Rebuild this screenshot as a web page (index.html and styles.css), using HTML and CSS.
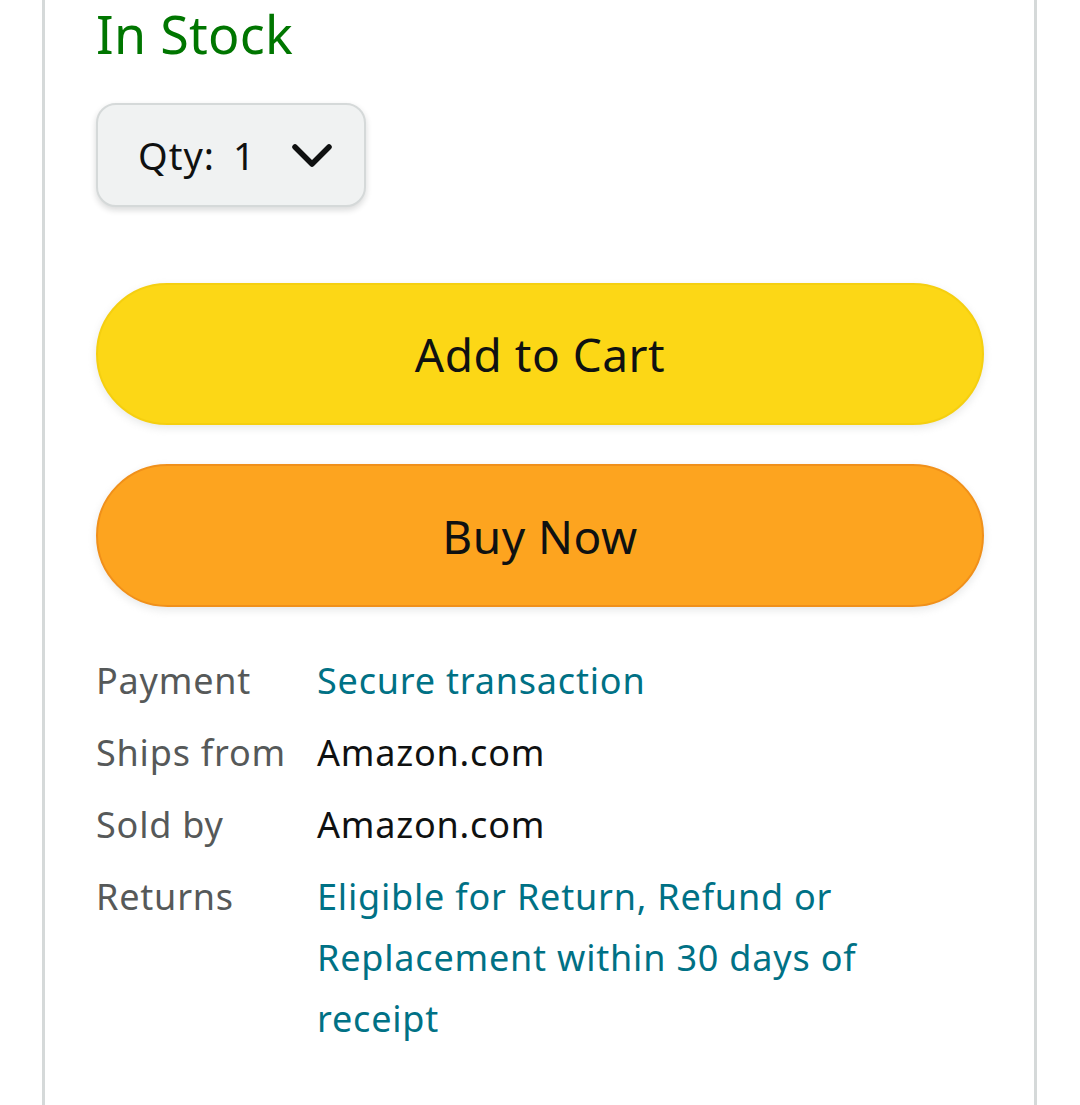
FILE: index.html
```html
<!DOCTYPE html>
<html lang="en">
<head>
<meta charset="utf-8">
<title>Buy box</title>
<link rel="stylesheet" href="styles.css">
</head>
<body>
<div class="panel">
  <div class="stock">In Stock</div>
  <div class="qty">
    <span class="qty-label">Qty:</span>
    <span class="qty-value">1</span>
    <svg class="chev" width="44" height="30" viewBox="0 0 44 30" aria-hidden="true">
      <polyline points="5,6 22,23 39,6" fill="none" stroke="#0f1111" stroke-width="5.5" stroke-linecap="round" stroke-linejoin="round"/>
    </svg>
  </div>
  <button class="btn btn-cart">Add to Cart</button>
  <button class="btn btn-buy">Buy Now</button>
  <div class="info">
    <div class="lbl">Payment</div>
    <div class="val link">Secure transaction</div>
    <div class="lbl">Ships from</div>
    <div class="val">Amazon.com</div>
    <div class="lbl">Sold by</div>
    <div class="val">Amazon.com</div>
    <div class="lbl">Returns</div>
    <div class="val link">Eligible for Return, Refund or Replacement within 30 days of receipt</div>
  </div>
</div>
</body>
</html>
```
FILE: styles.css
```css
html, body {
  margin: 0;
  padding: 0;
  background: #ffffff;
}
body {
  font-family: "Noto Sans", "Open Sans", sans-serif;
  color: #0f1111;
}
.panel {
  box-sizing: border-box;
  margin-left: 42px;
  width: 995px;
  min-height: 1105px;
  border-left: 3px solid #d5d9d9;
  border-right: 3px solid #d5d9d9;
  padding: 0 49px 0 51px;
  display: flex;
  flex-direction: column;
  align-items: flex-start;
}
.stock {
  font-size: 52px;
  line-height: 56px;
  padding-top: 6px;
  height: 58px;
  color: #007600;
  margin-left: 0;
  letter-spacing: 0.3px;
}
.qty {
  box-sizing: border-box;
  margin-top: 39px;
  width: 270px;
  height: 104px;
  border: 2px solid #d5d9d9;
  border-radius: 20px;
  background: #f0f2f2;
  box-shadow: 0 3px 6px rgba(15, 17, 17, 0.16);
  display: flex;
  align-items: center;
  padding-left: 40px;
  font-size: 38px;
  letter-spacing: 1px;
}
.qty-value {
  margin-left: 18px;
}
.chev {
  margin-left: 34px;
  margin-top: 2px;
}
.btn {
  box-sizing: border-box;
  width: 888px;
  border-radius: 72px;
  font-family: inherit;
  font-size: 46px;
  letter-spacing: 0.5px;
  color: #0f1111;
  display: flex;
  align-items: center;
  justify-content: center;
  padding: 0;
  box-shadow: 0 3px 8px rgba(213, 217, 217, 0.6);
}
.btn-cart {
  margin-top: 76px;
  height: 142px;
  background: #fcd716;
  border: 2px solid #f5cf10;
}
.btn-buy {
  margin-top: 39px;
  height: 143px;
  background: #fda41f;
  border: 2px solid #f0901a;
}
.info {
  margin-top: 43px;
  display: grid;
  grid-template-columns: 221px 1fr;
  row-gap: 11px;
  font-size: 36px;
  letter-spacing: 0.8px;
  line-height: 61px;
  width: 800px;
}
.lbl {
  color: #565959;
}
.val {
  color: #0f1111;
  max-width: 560px;
}
.link {
  color: #007185;
}
```
